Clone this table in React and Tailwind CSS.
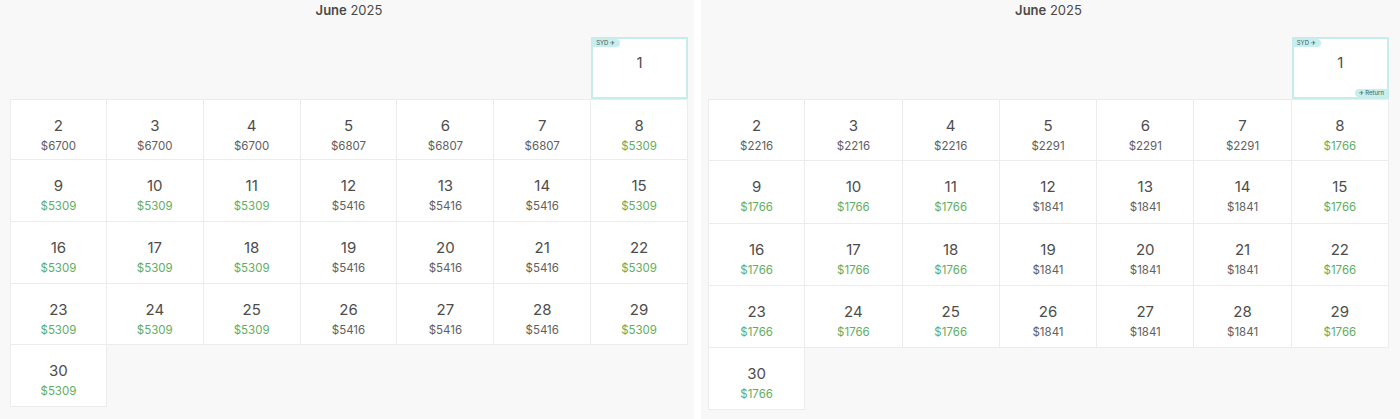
import React from 'react';

const font = { fontFamily: 'Inter, "Noto Sans", sans-serif' };

const leftPrices = {
  2: '6700', 3: '6700', 4: '6700', 5: '6807', 6: '6807', 7: '6807', 8: '5309',
  9: '5309', 10: '5309', 11: '5309', 12: '5416', 13: '5416', 14: '5416', 15: '5309',
  16: '5309', 17: '5309', 18: '5309', 19: '5416', 20: '5416', 21: '5416', 22: '5309',
  23: '5309', 24: '5309', 25: '5309', 26: '5416', 27: '5416', 28: '5416', 29: '5309',
  30: '5309',
};

const rightPrices = {
  2: '2216', 3: '2216', 4: '2216', 5: '2291', 6: '2291', 7: '2291', 8: '1766',
  9: '1766', 10: '1766', 11: '1766', 12: '1841', 13: '1841', 14: '1841', 15: '1766',
  16: '1766', 17: '1766', 18: '1766', 19: '1841', 20: '1841', 21: '1841', 22: '1766',
  23: '1766', 24: '1766', 25: '1766', 26: '1841', 27: '1841', 28: '1841', 29: '1766',
  30: '1766',
};

const DayCell = ({ day, price, cheap }) => (
  <div className="bg-white border-r border-b border-[#ececec] flex flex-col items-center pt-[16px]">
    <span className="text-[15px] leading-[20px] text-[#4d4d4d]">{day}</span>
    <span className={`mt-[2px] text-[11.5px] leading-[16px] ${cheap ? 'text-[#5fae5f]' : 'text-[#606060]'}`}>${price}</span>
  </div>
);

const FirstCell = ({ showReturn }) => (
  <div className="relative bg-white border-2 border-[#c6ecec] flex flex-col items-center pt-[14px]">
    <span className="absolute top-0 left-0 bg-[#c8eeee] text-[#3f5f5f] text-[6px] leading-[8px] pl-[3px] pr-[5px] rounded-r-full">SYD ✈</span>
    <span className="text-[15px] leading-[20px] text-[#4d4d4d]">1</span>
    {showReturn && (
      <span className="absolute bottom-0 right-0 bg-[#c8eeee] text-[#3f5f5f] text-[6px] leading-[8px] pl-[4px] pr-[3px] rounded-l-full">✈ Return</span>
    )}
  </div>
);

const MonthPanel = ({ prices, cheapest, showReturn, padClass, rowH }) => {
  const days = Array.from({ length: 29 }, (_, i) => i + 2);
  return (
    <div className={`bg-[#f8f8f8] h-full ${padClass}`}>
      <div className="h-[37px] pt-[1px] text-center text-[13px] text-[#4a4a4a]">
        <span className="font-semibold">June</span> 2025
      </div>
      <div className={`grid grid-cols-7 ${rowH}`}>
        <div className="col-span-6" />
        <FirstCell showReturn={showReturn} />
        {days.map((d) => (
          <div key={d} className={`${(d - 2) % 7 === 0 ? 'border-l border-[#ececec]' : ''} ${d <= 8 ? 'border-t border-[#ececec]' : ''} grid`}>
            <DayCell day={d} price={prices[d]} cheap={prices[d] === cheapest} />
          </div>
        ))}
      </div>
    </div>
  );
};

export default function App() {
  return (
    <div className="w-[1400px] h-[419px] flex bg-white" style={font}>
      <div className="w-[694px] h-full">
        <MonthPanel prices={leftPrices} cheapest="5309" padClass="pl-[10px] pr-[6px]" rowH="auto-rows-[61.7px]" />
      </div>
      <div className="w-[7px]" />
      <div className="flex-1 h-full">
        <MonthPanel prices={rightPrices} cheapest="1766" showReturn padClass="pl-[7px] pr-[11px]" rowH="auto-rows-[62.2px]" />
      </div>
    </div>
  );
}
